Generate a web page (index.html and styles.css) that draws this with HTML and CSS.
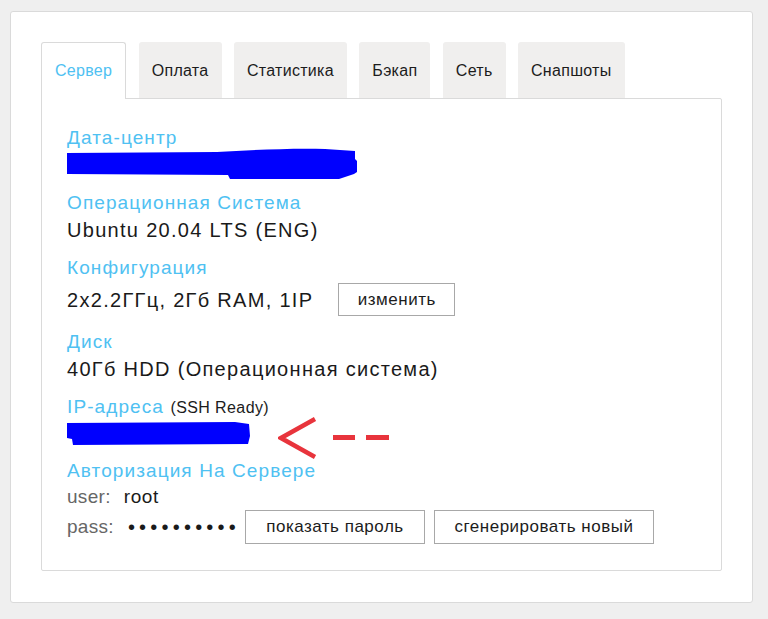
FILE: index.html
```html
<!DOCTYPE html>
<html lang="ru">
<head>
<meta charset="utf-8">
<title>Сервер</title>
<link rel="stylesheet" href="styles.css">
</head>
<body>
<div class="card">
  <div class="tabs">
    <div class="tab active">Сервер</div>
    <div class="tab">Оплата</div>
    <div class="tab">Статистика</div>
    <div class="tab">Бэкап</div>
    <div class="tab">Сеть</div>
    <div class="tab">Снапшоты</div>
  </div>
  <div class="panel">
    <div class="field first">
      <div class="label">Дата-центр</div>
      <svg class="redact redact-dc" width="292" height="31" viewBox="0 0 292 31">
        <path d="M0,5 L150,4 C185,2 225,0 258,1 L288,3 L288,11 L290,13 L290,24 L287,26 L272,31 L163,31 L161,27 L0,26 Z" fill="#0000fe"/>
      </svg>
    </div>
    <div class="field">
      <div class="label">Операционная Система</div>
      <div class="value">Ubuntu 20.04 LTS (ENG)</div>
    </div>
    <div class="field">
      <div class="label">Конфигурация</div>
      <div class="value-row">
        <span class="value">2x2.2ГГц, 2Гб RAM, 1IP</span>
        <button class="btn btn-change">изменить</button>
      </div>
    </div>
    <div class="field">
      <div class="label">Диск</div>
      <div class="value">40Гб HDD (Операционная система)</div>
    </div>
    <div class="field">
      <div class="label">IP-адреса <span class="note">(SSH Ready)</span></div>
      <div class="ip-row">
        <svg class="redact redact-ip" width="184" height="24" viewBox="0 0 184 24">
          <path d="M0,1 L168,0 L182,2 L183,14 L181,22 L6,23 L5,17 L0,16 Z" fill="#0000fe"/>
        </svg>
        <svg class="arrow" width="112" height="44" viewBox="0 0 112 44">
          <polyline points="37,2 3,21 37,40" fill="none" stroke="#e8343c" stroke-width="4.5"/>
          <rect x="55" y="18" width="22" height="5" fill="#e8343c"/>
          <rect x="88" y="18" width="23" height="5" fill="#e8343c"/>
        </svg>
      </div>
    </div>
    <div class="field">
      <div class="label">Авторизация На Сервере</div>
      <div class="cred cred-user">
        <span class="key">user:</span>
        <span class="cred-val">root</span>
      </div>
      <div class="cred cred-pass">
        <span class="key">pass:</span>
        <span class="dots">••••••••••</span>
        <button class="btn btn-show">показать пароль</button>
        <button class="btn btn-gen">сгенерировать новый</button>
      </div>
    </div>
  </div>
</div>
</body>
</html>
```

FILE: styles.css
```css
html, body {
  margin: 0;
  padding: 0;
}
body {
  background: #efefef;
  font-family: "Liberation Sans", Arial, Helvetica, sans-serif;
  color: #1a1a1a;
  padding: 11px 0 0 10px;
  height: 619px;
  box-sizing: border-box;
  overflow: hidden;
}
.card {
  width: 743px;
  box-sizing: border-box;
  background: #fff;
  border: 1px solid #dadada;
  border-radius: 3px;
  padding: 30px 30px 31px 30px;
}
.tabs {
  display: flex;
  align-items: flex-start;
  gap: 12.4px;
}
.tab {
  height: 56px;
  line-height: 58px;
  padding: 0 13px;
  background: #f0efee;
  border-radius: 3px 3px 0 0;
  font-size: 16px;
  letter-spacing: 0.3px;
  color: #1c1c1c;
  white-space: nowrap;
}
.tab.active {
  position: relative;
  z-index: 1;
  height: 57px;
  margin-bottom: -1px;
  box-sizing: border-box;
  background: #fff;
  border: 1px solid #dadada;
  border-bottom: none;
  color: #4fc1f2;
  line-height: 56px;
  padding: 0 13px 0 13px;
}
.panel {
  display: flex;
  flex-direction: column;
  width: 681px;
  box-sizing: border-box;
  border: 1px solid #dadada;
  border-radius: 0 2px 2px 2px;
  padding: 26px 25px 26px 25px;
}
.field {
  margin-top: 11px;
}
.field.first {
  margin-top: 0;
}
.label {
  font-size: 19px;
  line-height: 26px;
  letter-spacing: 1.1px;
  color: #4fc1f2;
  white-space: nowrap;
}
.note {
  font-size: 16px;
  letter-spacing: 0.4px;
  color: #1c1c1c;
}
.value {
  font-size: 20px;
  line-height: 28px;
  letter-spacing: 1.3px;
  white-space: nowrap;
}
.redact {
  display: block;
}
.redact-dc {
  margin-top: -3px;
}
.value-row {
  display: flex;
  align-items: center;
  gap: 25px;
  margin: 2px 0 2px 0;
}
.btn {
  font-family: "Liberation Sans", Arial, Helvetica, sans-serif;
  background: #fff;
  border: 1px solid #a8a8a8;
  border-radius: 0;
  color: #1c1c1c;
  font-size: 17px;
  letter-spacing: 0.5px;
  margin: 0;
  cursor: pointer;
}
.btn-change {
  height: 33px;
  width: 117px;
  padding: 0;
}
.ip-row {
  display: flex;
  align-items: flex-start;
  margin: 1px 0 1px 0;
}
.arrow {
  display: block;
  margin: -5px 0 -15px 27px;
}
.cred {
  display: flex;
  align-items: center;
  font-size: 19px;
  line-height: 26px;
}
.cred-user {
  margin-top: 0;
}
.key {
  color: #666;
  letter-spacing: 0.3px;
  margin-right: 13px;
}
.cred-val {
  letter-spacing: 0.6px;
}
.cred-pass {
  height: 34px;
  margin-top: 0;
}
.cred-pass .key {
  margin-right: 14px;
}
.dots {
  font-size: 20px;
  letter-spacing: 4.2px;
  margin-right: 5px;
}
.btn-show {
  height: 34px;
  width: 180px;
  padding: 0;
  margin-right: 9px;
}
.btn-gen {
  height: 34px;
  width: 220px;
  padding: 0;
}
```
